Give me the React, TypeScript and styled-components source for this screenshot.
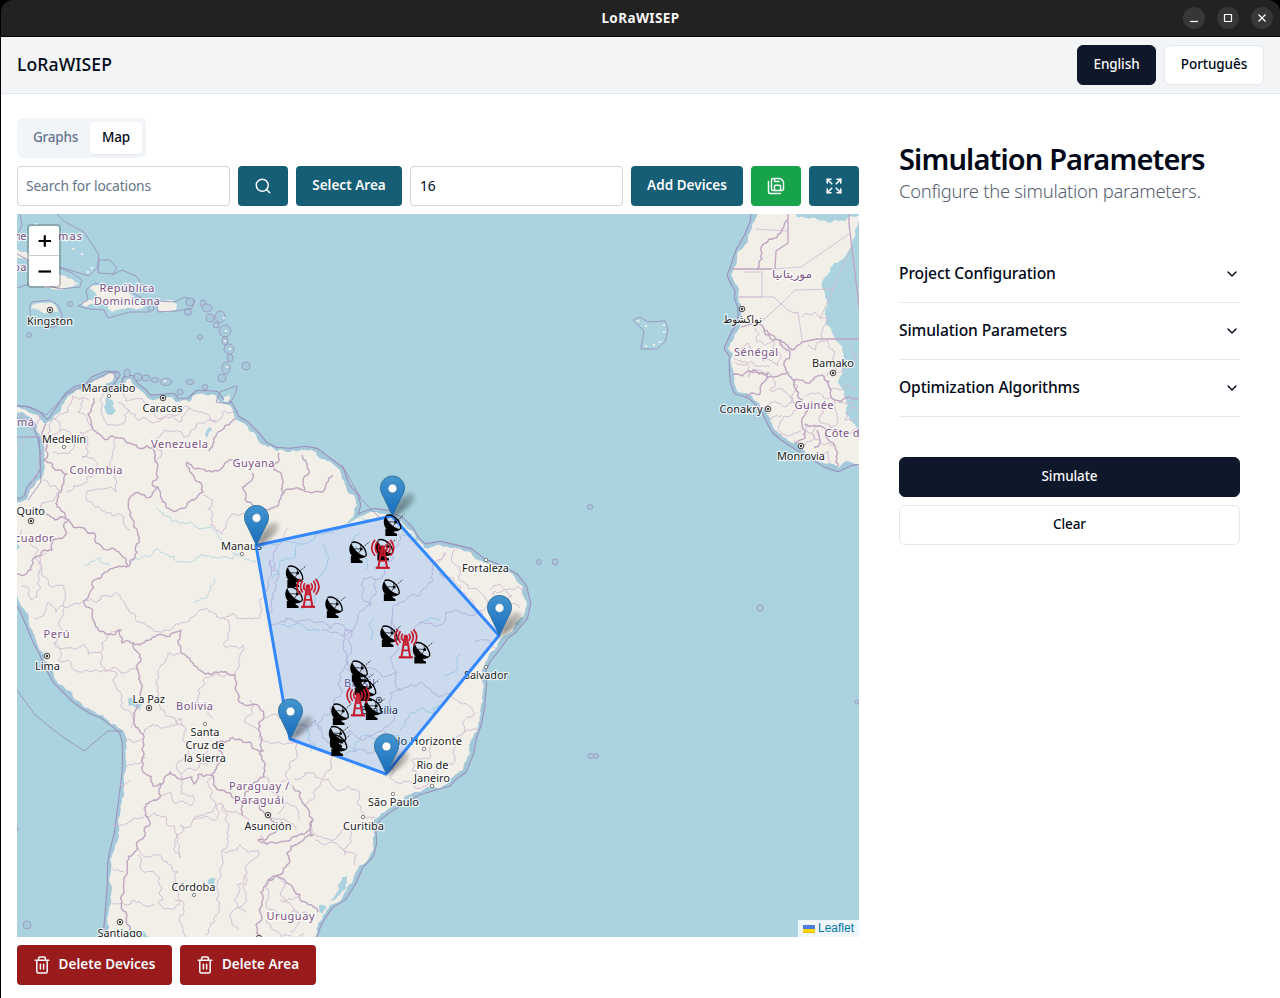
import React from "react";
import styled, { createGlobalStyle } from "styled-components";
import { ChevronDown, Expand, SaveAll, Search } from "lucide-react";

const Global = createGlobalStyle`
  *, *::before, *::after { box-sizing: border-box; }
  body { margin: 0; background: #000; font-family: "Noto Sans", "Open Sans", sans-serif; color: #020817; }
  button, input { font-family: inherit; }
`;

const Window = styled.div`
  width: 1280px;
  height: 998px;
  border-left: 1px solid #000;
  overflow: hidden;
  display: flex;
  flex-direction: column;
  background: #fff;
`;
const TitleBarBack = styled.div`
  background: #000;
  flex: none;
`;
const TitleBar = styled.div`
  height: 37px;
  background: #222;
  border-bottom: 1px solid #000;
  border-radius: 12px 12px 0 0;
  display: grid;
  grid-template-columns: 1fr auto 1fr;
  align-items: center;
`;
const WindowTitle = styled.span`
  grid-column: 2;
  font-size: 13.5px;
  font-weight: 700;
  letter-spacing: 0.4px;
  color: #f5f5f5;
`;
const WindowControls = styled.div`
  grid-column: 3;
  display: flex;
  justify-content: flex-end;
  gap: 12px;
  padding-right: 7px;
`;
const WindowButton = styled.span`
  width: 22px;
  height: 22px;
  border-radius: 50%;
  background: #373737;
  display: flex;
`;

const Header = styled.header`
  height: 57px;
  flex: none;
  background: #f3f4f6;
  border-bottom: 1px solid #e2e8f0;
  padding: 0 16px;
  display: flex;
  align-items: center;
  justify-content: space-between;
`;
const Brand = styled.h1`
  margin: 0;
  padding-bottom: 2px;
  font-size: 17.6px;
  font-weight: 500;
  letter-spacing: 0.08px;
`;
const Row = styled.div`
  display: flex;
  gap: 8px;
`;

type Tone = "dark" | "outline" | "teal" | "green" | "red";
const tones: Record<Tone, string> = {
  dark: "background:#0f172a;color:#f8fafc;border:1px solid #0f172a;",
  outline: "background:#fff;color:#020817;border:1px solid #e2e8f0;",
  teal: "background:#155e75;color:#f8fafc;border:0;",
  green: "background:#16a34a;color:#f8fafc;border:0;",
  red: "background:#991b1b;color:#f8fafc;border:0;",
};
const isPlain = (tone: Tone) => tone === "dark" || tone === "outline";
const Button = styled.button<{ $tone: Tone; $width?: number }>`
  ${(p) => tones[p.$tone]}
  width: ${(p) => (p.$width ? `${p.$width}px` : "100%")};
  flex: none;
  height: 40px;
  padding: 0 0 2px;
  border-radius: ${(p) => (isPlain(p.$tone) ? 6 : 4)}px;
  display: flex;
  align-items: center;
  justify-content: center;
  gap: 9px;
  font-size: 13.5px;
  font-weight: ${(p) => (isPlain(p.$tone) ? 500 : 600)};
  letter-spacing: ${(p) => (isPlain(p.$tone) ? -0.08 : 0.03)}px;
  white-space: nowrap;
  svg { position: relative; top: 1px; }
`;

const Body = styled.div`
  flex: 1;
  display: flex;
  padding: 24px 16px 0;
`;
const MapColumn = styled.main`
  width: 842px;
  display: flex;
  flex-direction: column;
  align-items: flex-start;
  gap: 8px;
`;
const Tabs = styled.div`
  display: flex;
  height: 40px;
  padding: 4px;
  border-radius: 6px;
  background: #f1f5f9;
`;
const Tab = styled.div<{ $active?: boolean; $width: number }>`
  width: ${(p) => p.$width}px;
  height: 32px;
  padding-bottom: 2px;
  border-radius: 4px;
  display: flex;
  align-items: center;
  justify-content: center;
  font-size: 13.5px;
  font-weight: 500;
  letter-spacing: -0.2px;
  color: ${(p) => (p.$active ? "#020817" : "#64748b")};
  background: ${(p) => (p.$active ? "#fff" : "transparent")};
  box-shadow: ${(p) => (p.$active ? "0 1px 2px rgba(0,0,0,.06)" : "none")};
`;
const Field = styled.input<{ $pad: number }>`
  width: 213px;
  height: 40px;
  border: 1px solid #d1d5db;
  border-radius: 4px;
  padding: 0 ${(p) => p.$pad}px 2px;
  font-size: 13.8px;
  letter-spacing: -0.15px;
  color: #020817;
  outline: 0;
  &::placeholder { color: #64748b; opacity: 1; }
`;

const MapFrame = styled.div`
  position: relative;
  width: 842px;
  height: 723px;
  overflow: hidden;
  background: #aad3df;
  > svg { display: block; }
`;
const ZoomControl = styled.div`
  position: absolute;
  left: 10px;
  top: 10px;
  border: 2px solid rgba(0, 0, 0, 0.2);
  border-radius: 4px;
  background-clip: padding-box;
  background-color: #fff;
`;
const ZoomButton = styled.div`
  width: 30px;
  height: 30px;
  display: flex;
  align-items: center;
  justify-content: center;
  &:first-child { border-bottom: 1px solid #ccc; }
`;
const Attribution = styled.div`
  position: absolute;
  right: 0;
  bottom: 0;
  height: 17px;
  width: 61px;
  background: rgba(255, 255, 255, 0.8);
  display: flex;
  align-items: center;
  gap: 3px;
  padding-left: 5px;
  font: 12px/17px "Liberation Sans", Arial, sans-serif;
  color: #0078a8;
`;

const Side = styled.aside`
  width: 341px;
  margin-left: 40px;
  padding-top: 23px;
`;
const SideTitle = styled.h2`
  margin: 0;
  font-size: 29px;
  line-height: 36px;
  font-weight: 600;
  letter-spacing: -0.86px;
  white-space: nowrap;
`;
const SideNote = styled.p`
  margin: 0 0 42px;
  font-size: 18.4px;
  line-height: 27px;
  font-weight: 300;
  letter-spacing: -0.28px;
  white-space: nowrap;
  color: #566070;
`;
const AccordionRow = styled.div`
  height: 57px;
  padding-bottom: 2px;
  border-bottom: 1px solid #e2e8f0;
  display: flex;
  align-items: center;
  justify-content: space-between;
  font-size: 15.6px;
  font-weight: 500;
  letter-spacing: -0.12px;
  svg { position: relative; top: 1px; }
`;
const Actions = styled.div`
  margin-top: 40px;
  display: flex;
  flex-direction: column;
  gap: 8px;
`;

const TrashIcon = () => (
  <svg width="16" height="18" fill="none" stroke="currentColor" strokeWidth="1.5" strokeLinecap="round" strokeLinejoin="round">
    <path d="M1.2 4.2H14.8M4.6 4.2V2.2Q4.6 1 5.8 1H10.2Q11.4 1 11.4 2.2V4.2M2.8 4.2V15.5Q2.8 17 4.3 17H11.7Q13.2 17 13.2 15.5V4.2M6.4 8.2V13M9.6 8.2V13" />
  </svg>
);

/* ---- map geometry, in screen units of the 842x723 view at 17,214 ---- */

const southAmerica =
  "M10 409L26 410L38 415L46 424L52 420L62 405L68 396L76 390L89 386L94 380L106 375L116 375L111 382L104 386L103 394L113 392L124 390L126 380L131 379L134 385L144 393L149 399L163 398L173 397L176 402L189 402L198 394L216 395L221 402L229 405L233 412L236 419L246 425L256 435L264 445L276 451L290 452L306 450L316 452L328 461L340 470L346 486L355 497L357 505L354 515L347 523L362 516L374 512L388 514L401 521L410 530L416 540L424 548L440 545L453 548L470 552L483 562L503 570L515 577L523 587L527 603L524 617L513 630L506 635L497 647L487 660L482 670L483 683L481 707L478 723L473 737L470 753L463 770L453 777L448 783L433 787L417 792L403 800L387 810L377 818L372 827L373 843L370 855L360 865L352 883L343 897L330 905L323 915L318 923L310 945L106 945L109 910L111 885L111 867L113 853L118 833L121 810L124 787L126 770L126 743L123 731L116 725L103 715L91 710L76 700L66 690L56 680L49 667L43 653L36 640L29 623L22 607L10 590L10 504L23 501L28 497L30 489L38 480L44 470L44 452L41 436L36 424L28 416L10 414Z";
const africa =
  "M755 205L754 222L748 236L740 250L737 258L733 270L731 275L735 284L739 290L738 298L741 305L742 316L740 325L734 335L728 348L733 355L733 370L734 382L737 391L745 393L752 396L758 402L765 410L770 421L775 430L783 437L792 443L804 450L815 457L826 464L838 468L851 462L870 458L870 205Z";
const islands =
  "M32 305L42 303L56 307L58 312L44 314L31 309ZM10 239L26 252L30 262L10 258ZM56 274L72 279L79 284L66 288L44 288L45 284L58 283ZM89 288L98 285L112 288L128 293L146 302L145 307L122 309L112 313L107 303L86 307L78 303L93 300L97 296ZM158 303L177 304L176 310L158 310ZM224 397L230 394L228 402L223 401Z";
const lakes =
  "M107 397L113 401L116 410L112 415L106 413L104 407ZM342 877L348 875L345 890L334 900L330 901L337 892ZM127 933L145 932L150 938L125 938ZM209 427L212 430L208 439L205 436ZM208 880L216 878L215 884L208 884ZM318 905L326 906L322 914ZM130 697L142 703L140 710L129 706Z";

/* national boundaries */
const national = [
  "M94 398L92 407L88 414L91 425L97 433L103 438L121 438L130 443L153 448L157 463L152 484L158 487L161 498L166 504L178 510L187 505L194 500L203 492L192 474L187 462L195 469L218 471L241 463M209 451L214 442L222 430L236 419M158 487L152 495L129 499L130 511L134 527L129 566L119 566L103 574L92 582L84 601L94 622L104 632L121 630L122 643L140 645L157 635L181 630L181 652L192 662L216 672L235 675L238 700L259 706L264 718L265 765L264 777L250 787L243 816M127 566L126 559L99 544L84 528L66 519L46 514M68 520L66 534L52 550L36 557L27 573L17 574M46 424L42 435L47 446L44 460L55 470L67 474L59 493L66 518",
  "M134 642L141 659L139 675L141 690L134 717L143 734L144 755L153 786L162 784L170 772L192 777L194 784L198 775L211 775L222 790L235 798L268 815L277 830L258 840L275 843L289 841L301 834L313 820L313 835L268 880L281 878L300 895L318 912M162 784L158 799L144 808L144 837L133 854L127 870L124 893L127 915L130 937M211 775L216 744L250 742L264 750M268 880L261 907L256 925L263 938M313 820L302 802L293 786M252 473L243 487L246 501L257 513L273 508L281 497L303 490L320 492L333 475M279 453L274 470L281 497M302 455L309 470L305 490",
  "M757 269L762 259L766 243L778 234L787 220M802 342L792 350L787 345L763 327L741 327M763 327L781 340L790 352L788 373L795 380L822 375L831 390L835 400L858 399M787 373L750 371L733 375M752 370L768 373L764 382L760 394L746 397M795 380L798 397L808 409L802 424L805 438L795 443M805 424L820 426L835 446L838 467M814 448L820 443L817 430",
];
/* boundaries surveyed as straight lines */
const straight = "M788 205L788 243L776 251L775 269M731 269L775 269M849 205L849 224L863 339M870 339L817 339L802 342";
/* state and province boundaries */
const provinces =
  "M72 396L68 412L55 418L60 431L48 440M72 396L82 398L78 412L92 425M82 398L89 400M60 431L76 438L73 449L53 452M92 425L80 432L88 445L82 457L97 463M103 394L101 410L106 422L125 422L129 410L118 402M124 391L126 401L146 403L155 415L181 408L196 411L216 422L234 412M129 410L140 420L161 418L182 421L190 408M157 463L156 439L168 431L196 427L216 420M116 438L116 492L87 492L86 499L102 511L130 530M98 463L85 483L66 493M43 480L60 490L50 501L38 510L21 506M55 418L39 460L30 490M22 530L30 542L37 560L39 590L31 600L22 586M46 553L42 575L52 588L64 586L65 597L56 612L48 602L34 618M84 600L74 603L62 617L61 634L54 643L72 648L84 644L88 654L100 652L102 643L120 630M54 643L58 660L68 660L78 672L86 670L100 672L116 668L122 673L139 670M100 652L101 661L116 672L117 690L125 710L131 728M85 600L127 608L140 622L164 630L184 622L200 610L212 612L224 618L260 618L264 595L271 560M223 618L223 644L243 645L239 663L235 675M203 495L213 500L211 518L216 530L222 534L226 528L240 515L250 511M16 416L30 430L40 414M143 734L158 725L168 727L182 718L186 730L189 750L182 780M181 652L161 665L157 685L160 707L175 718L184 727M235 675L198 690L197 702L213 718M182 780L182 794L193 795L192 805L177 803L170 792L154 800M144 815L165 816L168 826L174 826L175 842L180 858L184 830L180 825L190 827L193 820L214 820L214 775M193 820L222 804L258 830M222 804L222 850L258 850L246 870L246 895L232 912L238 930M222 850L220 870L220 905L205 935M138 855L140 868L160 878L163 900L158 902L175 908L175 890L178 872L160 855L138 848M175 900L184 903L186 937M112 825L127 824L144 817M110 866L124 872M112 904L127 905L140 902L155 904M126 767L138 764L146 757M125 740L142 738M120 784L130 780M207 745L209 762L193 770L182 774M247 873L237 885L234 900L246 912M270 560L276 585L270 620L272 625L330 629L351 631L358 615L371 605L364 578L393 560L400 540L397 527M275 570L281 543L287 528M322 630L352 630L346 660L343 690L330 714L319 722M371 605L374 578M352 631L348 665L372 669L396 672L398 640L392 618L402 602L420 595L433 580L445 552M392 618L400 640L440 625L458 610L490 602L495 591L525 590M455 549L456 565L459 579L480 592L496 605L520 608M444 553L440 575L460 590L485 620M398 672L401 690L390 693L395 715L382 731L361 740L350 730L343 735M401 690L422 682L446 693L470 706L474 715L463 722L464 732L478 728M346 668L361 680L371 673M319 722L322 738L342 740L355 752L385 748L385 731M464 732L455 745L452 765L438 768L430 780L402 783L390 778L394 758M338 747L330 770L316 778L294 779M305 807L315 790L330 782L356 790L362 812L375 817M312 828L340 834L351 828L343 850L357 855L355 865M315 840L336 843L345 855M268 880L266 905L285 918L304 912L311 918M280 878L285 901L300 895M280 900L296 911L290 932M266 920L304 934M17 449L25 438L42 438M265 718L289 724L315 720L322 730M250 700L260 740L296 742L292 786M265 777L280 797L286 780M270 820L284 818L296 830M277 815L288 803L300 820M260 835L268 846M420 778L412 760L438 742M499 650L488 640L475 642M505 605L512 596L500 584L490 590";
const africaStraight =
  "M756 229L787 231M744 272L762 272L762 297L739 297M738 297L774 297L781 304L795 290L833 289M775 269L801 267L849 234M850 250L820 319M781 304L761 322M798 312L802 340";
const africaProvinces =
  "M781 304L790 311L798 312M802 317L828 317L822 338M734 359L751 361L770 367M755 328L757 342L773 340L781 355L778 366L763 361L748 343L735 350M735 362L747 364L749 377L760 370L770 374M767 373L775 382L770 390L785 392L793 400L784 407L771 402L764 410M793 380L798 387L791 402L801 409L784 416L783 434L801 431M782 415L770 420M808 345L816 350L826 340L835 352L830 362L837 370L827 376M851 345L852 365L838 373M825 380L830 390L848 384L856 390M805 397L818 393L831 397M835 400L838 418L828 430L845 437L858 427M818 405L820 422L833 430M838 400L852 402L858 410M805 425L815 438L805 445L794 440M820 426L812 433L822 444L834 445M818 453L828 451L831 462M851 407L845 420L858 421";
const rivers =
  "M157 508L171 521L190 522L205 527L217 533L229 548L242 556L256 560M130 565L146 556L158 549L174 556L188 562L206 556L223 557L241 553M84 565L100 558L110 565M195 603L210 590L214 578M258 550L275 545L298 544L315 535L336 529L352 520L370 520M271 580L295 557L297 545M300 610L325 570L327 555L322 545M360 533L350 547L360 555L366 570M281 625L320 630M372 640L374 618M402 535L416 540M445 675L457 668L460 655M400 730L415 713L445 700M345 755L372 738L400 735M300 725L315 745L310 752M420 625L440 620";
const maritime =
  "M17 236L22 225L20 214M57 214L65 222L84 232L99 255L97 268L89 276L60 267M99 260L110 260L117 268L113 274L98 273ZM112 275L122 270L136 276L148 293M17 288L35 282L60 289L80 287L82 280L72 273L60 268M17 254L32 262M30 305L32 302L50 300L58 305L62 315L61 325L48 328L30 317ZM78 306L88 300L86 290L95 283L110 286L130 292L148 301L150 312L130 312L108 318L104 310L90 309ZM156 301L175 302L184 297L195 300L192 308L176 311L158 312ZM216 402L220 392L233 387L237 386L236 392L230 404ZM17 437L39 437L41 482L28 500M17 406L30 407L46 415L67 394L110 372L118 375M17 690L35 715L60 735L84 751L108 731L123 731M342 465L362 500L380 518M633 320L640 317L648 322L665 321L668 330L665 342L657 349L641 349L644 331Z";

/* Midpoint displacement: breaks each long segment into a winding line. */
let seed = 7;
const random = () => {
  seed = (seed * 16807) % 2147483647;
  return seed / 2147483647 - 0.5;
};
type Pt = [number, number];
const split = (a: Pt, b: Pt, amount: number): Pt[] => {
  const dx = b[0] - a[0];
  const dy = b[1] - a[1];
  if (Math.hypot(dx, dy) < 3.5) return [b];
  const k = random() * amount;
  const mid: Pt = [(a[0] + b[0]) / 2 - dy * k, (a[1] + b[1]) / 2 + dx * k];
  return [...split(a, mid, amount), ...split(mid, b, amount)];
};
const winding = (d: string, amount: number) =>
  d.split("M").filter(Boolean).map((part) => {
    const closed = part.endsWith("Z");
    const pts = part.replace("Z", "").split("L").map((s) => s.split(" ").map(Number) as Pt);
    if (closed) pts.push(pts[0]);
    const out: Pt[] = [pts[0]];
    for (let i = 1; i < pts.length; i++) out.push(...split(pts[i - 1], pts[i], amount));
    return "M" + out.map((p) => `${p[0].toFixed(1)} ${p[1].toFixed(1)}`).join("L") + (closed ? "Z" : "");
  }).join("");

const coastPath = winding(southAmerica + africa + islands, 0.35);
const lakePath = winding(lakes, 0.4);
const nationalPath = winding(national.join(""), 0.5);
const provincePath = winding(provinces + africaProvinces, 0.55);
const riverPath = winding(rivers, 0.6);

const islets: [number, number, number, number][] = [
  [70, 304, 2.5, 2.5], [29, 335, 2.5, 2.5], [200, 337, 2.5, 2.5], [246, 366, 4, 4], [190, 302, 4, 4], [188, 312, 4, 3],
  [203, 303, 3, 3], [207, 308, 5, 4], [210, 318, 4, 4], [216, 325, 3, 3], [220, 317, 5, 6], [225, 331, 6, 6],
  [225, 341, 3, 4], [229, 349, 5, 5], [230, 358, 3, 4], [226, 368, 4, 6], [222, 378, 4, 4], [117, 375, 3, 3],
  [127, 373, 3, 4], [138, 377, 4, 4], [146, 378, 4, 3], [155, 380, 4, 2.5], [166, 382, 6, 3.5], [190, 382, 4, 2.5],
  [180, 392, 3, 3], [205, 387, 3, 2.5], [151, 308, 3, 3], [590, 507, 2.5, 2.5], [539, 562, 2.5, 2.5],
  [555, 562, 3, 3], [760, 608, 3, 3], [591, 756, 3.5, 2.5], [596, 756, 2.5, 2.5], [27, 925, 4, 4], [857, 702, 2, 2], [16, 829, 2, 2],
];
const specks: [number, number][] = [
  [638, 321], [646, 326], [664, 325], [664, 332], [654, 345], [660, 342], [646, 346], [226, 331], [225, 341], [230, 349],
  [88, 272], [73, 249], [82, 254], [65, 240], [58, 235], [70, 237], [92, 268], [36, 224], [224, 318], [227, 367], [165, 381],
];

type LabelSpec = [string, number, number, "country" | "city", number];
const labels: LabelSpec[] = [
  ["ne", 14, 240, "country", 12.5], ["mas", 58, 240, "country", 24], ["ba", 13, 271, "country", 13.5],
  ["República", 99.5, 292, "country", 55], ["Dominicana", 94, 305, "country", 66], ["má", 17, 426, "country", 17],
  ["Venezuela", 151, 448, "country", 57], ["Guyana", 232.5, 467, "country", 42], ["Colombia", 69.5, 474, "country", 53],
  ["cuador", 15, 542, "country", 38.5], ["Perú", 43.5, 638, "country", 26], ["Bolivia", 176, 710, "country", 37],
  ["Brasil", 344, 687, "country", 31], ["Paraguay /", 229, 790, "country", 60], ["Paraguái", 234, 804, "country", 50],
  ["Uruguay", 266.5, 920, "country", 48], ["Sénégal", 734, 356, "country", 44], ["Guinée", 794.5, 409, "country", 39],
  ["Côte d", 824.5, 437, "country", 35],
  ["Kingston", 27, 325, "city", 46], ["Maracaibo", 81.5, 392, "city", 54], ["Caracas", 142.5, 412, "city", 40],
  ["Medellín", 42, 443, "city", 44], ["Quito", 16.5, 515, "city", 28.5], ["Lima", 35, 670, "city", 25],
  ["La Paz", 132.5, 703, "city", 32.5], ["Santa", 190.5, 736, "city", 29], ["Cruz de", 185.5, 749, "city", 39],
  ["la Sierra", 184, 762, "city", 42], ["Manaus", 221, 550, "city", 41], ["Fortaleza", 462, 572, "city", 47],
  ["Salvador", 464, 679, "city", 44], ["Brasília", 361, 714, "city", 37], ["Belo Horizonte", 384, 745, "city", 78],
  ["Rio de", 416.5, 769, "city", 32], ["Janeiro", 414, 782, "city", 36], ["São Paulo", 368, 806, "city", 51],
  ["Curitiba", 343, 830, "city", 41], ["Asunción", 244.5, 830, "city", 47], ["Córdoba", 171.5, 891, "city", 44],
  ["Santiago", 97.5, 936.5, "city", 45], ["Bamako", 812, 367, "city", 42], ["Conakry", 719.5, 413, "city", 43],
  ["Monrovia", 777, 459.5, "city", 48],
];
const capitals: Pt[] = [
  [50, 310], [163, 398], [31, 521], [47, 656], [149, 708], [268, 815], [120, 922], [379, 700], [742, 309], [833, 373], [768, 409], [801, 446], [259, 938],
];
const towns: Pt[] = [
  [109, 396], [64, 447], [205, 724], [242, 554], [486, 560], [486, 667], [424, 749], [432, 786], [393, 794], [363, 817], [194, 895],
];

const area: Pt[] = [[256, 545.5], [392, 516], [499, 635.5], [386, 774], [290, 739]];
const dishes: Pt[] = [
  [383, 514], [348.5, 541], [375, 538.5], [285, 565], [284.5, 586], [324.5, 596], [381.5, 579],
  [379.5, 625], [412, 641.5], [349.5, 660], [352.5, 673], [358, 679], [363.5, 698], [330.5, 703], [328, 725.5], [329, 734],
];
const towers: Pt[] = [[382.7, 547.5], [308, 586.5], [405.8, 637], [358, 695]];

const Pin = ({ x, y }: { x: number; y: number }) => (
  <g transform={`translate(${x - 12} ${y - 40.5})`}>
    <path d="M12 41L20 24Q30 13 35 20Q36 29 14 41Z" fill="url(#shade)" filter="url(#soft)" />
    <path
      d="M12.5 .5C5.8 .5 .5 5.8 .5 12.4C.5 15.3 1.4 17.8 3.2 20.8L12.5 40.5L21.8 20.8C23.6 17.8 24.5 15.3 24.5 12.4C24.5 5.8 19.2 .5 12.5 .5Z"
      fill="url(#pin)" stroke="#2e6c97" strokeWidth=".9"
    />
    <circle cx="12.5" cy="13" r="4.4" fill="#fff" stroke="#2e6c97" strokeWidth=".5" />
  </g>
);

const Dish = ({ x, y }: { x: number; y: number }) => (
  <g transform={`translate(${x} ${y}) scale(.3333)`}>
    <path d="M9 5C-4 21 3 46 22 51C36 55 49 51 53 45C40 45 27 36 19 25C13 17 9 11 9 5Z" />
    <path d="M9 5C20 -1 38 7 46 20C52 30 55 39 52 45" fill="none" stroke="#000" strokeWidth="4" />
    <path d="M18 23L36 24M28 40L38 25L36 10" fill="none" stroke="#000" strokeWidth="2" />
    <circle cx="38" cy="24" r="4.5" />
    <path d="M43 19L64 2" stroke="#000" strokeWidth="2.4" strokeDasharray="5 3.5" />
    <path d="M7 44L7 66L42 66L42 60L35 57L31 50Z" />
  </g>
);

const Tower = ({ x, y }: { x: number; y: number }) => (
  <g transform={`translate(${x} ${y}) scale(.3333)`} fill="none" stroke="#c51a2c" strokeWidth="5">
    <circle r="7" fill="#c51a2c" stroke="none" />
    <path d="M-9 -10Q-17 0 -9 11M9 -10Q17 0 9 11M-16 -17Q-29 0 -16 18M16 -17Q29 0 16 18M-23 -23Q-43 0 -23 25M23 -23Q43 0 23 25" />
    <path d="M-4 5L-13 60M4 5L13 60" strokeWidth="6" />
    <path d="M0 5V24M-6 24H6M-8 40H8" strokeWidth="5" />
    <path d="M-21 61H21" strokeWidth="6.5" />
  </g>
);

const WorldMap = () => (
  <svg width="842" height="723" viewBox="17 214 842 723">
    <defs>
      <linearGradient id="pin" x1="0" y1="0" x2="0" y2="1">
        <stop offset="0" stopColor="#4496cf" />
        <stop offset="1" stopColor="#176cbd" />
      </linearGradient>
      <linearGradient id="shade" x1="0" y1="1" x2="1" y2="0">
        <stop offset="0" stopOpacity=".5" />
        <stop offset="1" stopOpacity=".15" />
      </linearGradient>
      <filter id="soft" x="-50%" y="-50%" width="200%" height="200%">
        <feGaussianBlur stdDeviation="2" />
      </filter>
    </defs>
    <rect x="17" y="214" width="842" height="723" fill="#aad3df" />
    <g strokeLinejoin="round">
      <path d={southAmerica + africa} fill="none" stroke="#9a92bb" strokeWidth="8.5" />
      <path d={southAmerica + africa} fill="none" stroke="#a3c8da" strokeWidth="6.3" />
      <path d={coastPath} fill="#f2efe9" />
    </g>
    <path d={lakePath} fill="#aad3df" />
    <path d={riverPath} fill="none" stroke="#aad3df" strokeWidth=".8" />
    <g fill="none" strokeLinejoin="round">
      <path d={provincePath} stroke="#cfb9d1" strokeWidth=".9" />
      <path d={africaStraight} stroke="#cfb9d2" strokeWidth=".85" />
      <path d={nationalPath} stroke="#bfa5c0" strokeWidth="1.4" />
      <path d={straight} stroke="#bfa5c0" strokeWidth="1.3" />
      <path d={maritime} stroke="#9a92bb" strokeWidth=".9" />
    </g>
    {islets.map(([x, y, rx, ry], i) => (
      <ellipse key={i} cx={x} cy={y} rx={rx} ry={ry} fill="#a6cadb" stroke="#9a92bb" strokeWidth=".8" />
    ))}
    {specks.map(([x, y], i) => <ellipse key={i} cx={x} cy={y} rx="1.5" ry="1" fill="#f2efe9" />)}
    {towns.map(([x, y], i) => <circle key={i} cx={x} cy={y} r="1.7" fill="#fff" stroke="#555" strokeWidth=".7" />)}
    {capitals.map(([x, y], i) => (
      <g key={i}>
        <circle cx={x} cy={y} r="2.8" fill="#f2efe9" stroke="#333" strokeWidth=".9" />
        <circle cx={x} cy={y} r="1.2" fill="#333" />
      </g>
    ))}
    <g fontFamily='"Noto Sans", sans-serif' fontSize="11" paintOrder="stroke" stroke="#fff" strokeOpacity=".75" strokeWidth="2.4" strokeLinejoin="round">
      {labels.map(([t, x, y, kind, w]) => (
        <text key={t + x} x={x} y={y} textLength={w} fill={kind === "country" ? "#7c5182" : "#222"}>{t}</text>
      ))}
      <text x="772" y="278" fontFamily='"DejaVu Sans", sans-serif' textLength="40" lengthAdjust="spacingAndGlyphs" fill="#7c5182">موريتانيا</text>
      <text x="723" y="323" fontFamily='"DejaVu Sans", sans-serif' textLength="39" lengthAdjust="spacingAndGlyphs" fill="#222">نواكشوط</text>
    </g>
    <polygon points={area.map((p) => p.join(",")).join(" ")} fill="#3388ff" fillOpacity=".2" stroke="#3388ff" strokeWidth="3" strokeLinejoin="round" />
    {area.map(([x, y]) => <Pin key={x} x={x} y={y} />)}
    {dishes.map(([x, y]) => <Dish key={`${x}-${y}`} x={x} y={y} />)}
    {towers.map(([x, y]) => <Tower key={x} x={x} y={y} />)}
  </svg>
);

const windowGlyphs = ["M7 14.5H15", "M7.5 7.5H14.5V14.5H7.5Z", "M7.5 7.5L14.5 14.5M14.5 7.5L7.5 14.5"];
const sections = ["Project Configuration", "Simulation Parameters", "Optimization Algorithms"];

const App = () => (
  <>
    <Global />
    <Window>
      <TitleBarBack>
        <TitleBar>
          <WindowTitle>LoRaWISEP</WindowTitle>
          <WindowControls>
            {windowGlyphs.map((d) => (
              <WindowButton key={d}>
                <svg width="22" height="22" fill="none" stroke="#fff" strokeWidth="1.2"><path d={d} /></svg>
              </WindowButton>
            ))}
          </WindowControls>
        </TitleBar>
      </TitleBarBack>
      <Header>
        <Brand>LoRaWISEP</Brand>
        <Row>
          <Button $tone="dark" $width={79}>English</Button>
          <Button $tone="outline" $width={100}>Português</Button>
        </Row>
      </Header>
      <Body>
        <MapColumn>
          <Tabs>
            <Tab $width={69}>Graphs</Tab>
            <Tab $active $width={52}>Map</Tab>
          </Tabs>
          <Row>
            <Field $pad={8} placeholder="Search for locations" />
            <Button $tone="teal" $width={50}><Search size={18} strokeWidth={2} /></Button>
            <Button $tone="teal" $width={106}>Select Area</Button>
            <Field $pad={9} defaultValue="16" />
            <Button $tone="teal" $width={112}>Add Devices</Button>
            <Button $tone="green" $width={50}><SaveAll size={18} strokeWidth={2} /></Button>
            <Button $tone="teal" $width={50}><Expand size={18} strokeWidth={2.2} /></Button>
          </Row>
          <MapFrame>
            <WorldMap />
            <ZoomControl>
              <ZoomButton><svg width="13" height="13" stroke="#000" strokeWidth="2.2"><path d="M.5 7H13M6.8 1.2V12.8" /></svg></ZoomButton>
              <ZoomButton><svg width="13" height="13" stroke="#000" strokeWidth="2.2"><path d="M.5 6.5H13" /></svg></ZoomButton>
            </ZoomControl>
            <Attribution>
              <svg width="12" height="8"><path fill="#4c7be1" d="M0 0h12v4H0z" /><path fill="#ffd500" d="M0 4h12v3H0z" /><path fill="#e0bc00" d="M0 7h12v1H0z" /></svg>
              Leaflet
            </Attribution>
          </MapFrame>
          <Row>
            <Button $tone="red" $width={155}><TrashIcon />Delete Devices</Button>
            <Button $tone="red" $width={136}><TrashIcon />Delete Area</Button>
          </Row>
        </MapColumn>
        <Side>
          <SideTitle>Simulation Parameters</SideTitle>
          <SideNote>Configure the simulation parameters.</SideNote>
          {sections.map((t) => (
            <AccordionRow key={t}>{t}<ChevronDown size={16} /></AccordionRow>
          ))}
          <Actions>
            <Button $tone="dark">Simulate</Button>
            <Button $tone="outline">Clear</Button>
          </Actions>
        </Side>
      </Body>
    </Window>
  </>
);

export default App;
